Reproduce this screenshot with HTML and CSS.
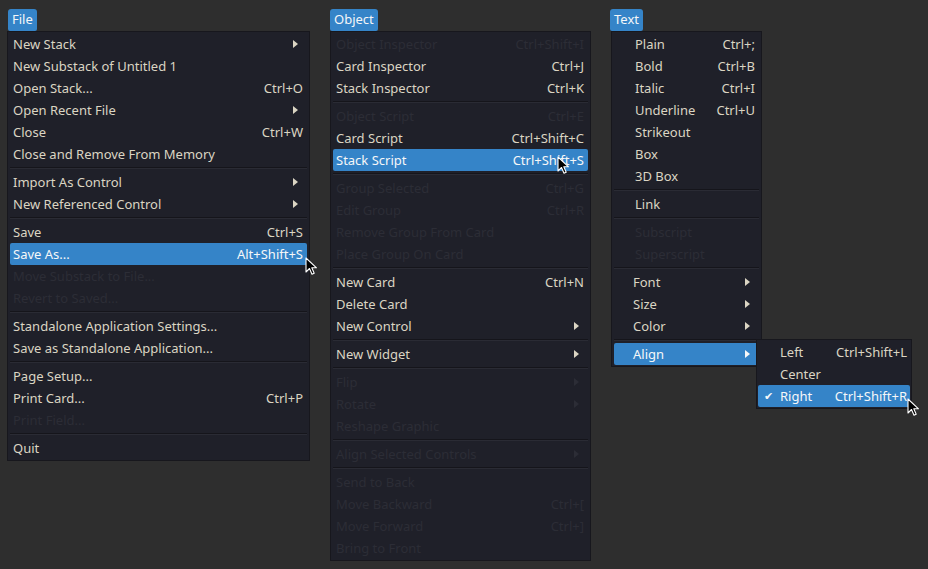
FILE: index.html
```html
<!DOCTYPE html>
<html>
<head>
<meta charset="utf-8">
<link rel="stylesheet" href="styles.css">
</head>
<body>
<div class="bar">
  <div class="col col-file">
    <div class="title">File</div>
    <div class="menu">
      <div class="item"><span class="label">New Stack</span><span class="arrow"></span></div>
      <div class="item"><span class="label">New Substack of Untitled 1</span></div>
      <div class="item"><span class="label">Open Stack...</span><span class="key">Ctrl+O</span></div>
      <div class="item"><span class="label">Open Recent File</span><span class="arrow"></span></div>
      <div class="item"><span class="label">Close</span><span class="key">Ctrl+W</span></div>
      <div class="item"><span class="label">Close and Remove From Memory</span></div>
      <div class="sep"></div>
      <div class="item"><span class="label">Import As Control</span><span class="arrow"></span></div>
      <div class="item"><span class="label">New Referenced Control</span><span class="arrow"></span></div>
      <div class="sep"></div>
      <div class="item"><span class="label">Save</span><span class="key">Ctrl+S</span></div>
      <div class="item active"><span class="label">Save As...</span><span class="key">Alt+Shift+S</span>
        <svg class="cursor" width="14" height="20" viewBox="0 0 14 20"><path d="M1 1 L1 15 L4.5 11.5 L7 17.2 L9.2 16.2 L6.8 10.8 L11.5 10.8 Z" fill="#000" stroke="#fff" stroke-width="1.1" stroke-linejoin="round"/></svg>
      </div>
      <div class="item disabled"><span class="label">Move Substack to File...</span></div>
      <div class="item disabled"><span class="label">Revert to Saved...</span></div>
      <div class="sep"></div>
      <div class="item"><span class="label">Standalone Application Settings...</span></div>
      <div class="item"><span class="label">Save as Standalone Application...</span></div>
      <div class="sep"></div>
      <div class="item"><span class="label">Page Setup...</span></div>
      <div class="item"><span class="label">Print Card...</span><span class="key">Ctrl+P</span></div>
      <div class="item disabled"><span class="label">Print Field...</span></div>
      <div class="sep"></div>
      <div class="item"><span class="label">Quit</span></div>
    </div>
  </div>

  <div class="col col-object">
    <div class="title">Object</div>
    <div class="menu">
      <div class="item disabled"><span class="label">Object Inspector</span><span class="key">Ctrl+Shift+I</span></div>
      <div class="item"><span class="label">Card Inspector</span><span class="key">Ctrl+J</span></div>
      <div class="item"><span class="label">Stack Inspector</span><span class="key">Ctrl+K</span></div>
      <div class="sep"></div>
      <div class="item disabled"><span class="label">Object Script</span><span class="key">Ctrl+E</span></div>
      <div class="item"><span class="label">Card Script</span><span class="key">Ctrl+Shift+C</span></div>
      <div class="item active"><span class="label">Stack Script</span><span class="key">Ctrl+Shift+S</span>
        <svg class="cursor cursor-obj" width="14" height="20" viewBox="0 0 14 20"><path d="M1 1 L1 15 L4.5 11.5 L7 17.2 L9.2 16.2 L6.8 10.8 L11.5 10.8 Z" fill="#000" stroke="#fff" stroke-width="1.1" stroke-linejoin="round"/></svg>
      </div>
      <div class="sep"></div>
      <div class="item disabled"><span class="label">Group Selected</span><span class="key">Ctrl+G</span></div>
      <div class="item disabled"><span class="label">Edit Group</span><span class="key">Ctrl+R</span></div>
      <div class="item disabled"><span class="label">Remove Group From Card</span></div>
      <div class="item disabled"><span class="label">Place Group On Card</span></div>
      <div class="sep"></div>
      <div class="item"><span class="label">New Card</span><span class="key">Ctrl+N</span></div>
      <div class="item"><span class="label">Delete Card</span></div>
      <div class="item"><span class="label">New Control</span><span class="arrow"></span></div>
      <div class="sep"></div>
      <div class="item"><span class="label">New Widget</span><span class="arrow"></span></div>
      <div class="sep"></div>
      <div class="item disabled"><span class="label">Flip</span><span class="arrow"></span></div>
      <div class="item disabled"><span class="label">Rotate</span><span class="arrow"></span></div>
      <div class="item disabled"><span class="label">Reshape Graphic</span></div>
      <div class="sep"></div>
      <div class="item disabled"><span class="label">Align Selected Controls</span><span class="arrow"></span></div>
      <div class="sep"></div>
      <div class="item disabled"><span class="label">Send to Back</span></div>
      <div class="item disabled"><span class="label">Move Backward</span><span class="key">Ctrl+[</span></div>
      <div class="item disabled"><span class="label">Move Forward</span><span class="key">Ctrl+]</span></div>
      <div class="item disabled"><span class="label">Bring to Front</span></div>
    </div>
  </div>

  <div class="col col-text">
    <div class="title">Text</div>
    <div class="menu">
      <div class="item check"><span class="label">Plain</span><span class="key">Ctrl+;</span></div>
      <div class="item check"><span class="label">Bold</span><span class="key">Ctrl+B</span></div>
      <div class="item check"><span class="label">Italic</span><span class="key">Ctrl+I</span></div>
      <div class="item check"><span class="label">Underline</span><span class="key">Ctrl+U</span></div>
      <div class="item check"><span class="label">Strikeout</span></div>
      <div class="item check"><span class="label">Box</span></div>
      <div class="item check"><span class="label">3D Box</span></div>
      <div class="sep"></div>
      <div class="item check"><span class="label">Link</span></div>
      <div class="sep"></div>
      <div class="item check disabled"><span class="label">Subscript</span></div>
      <div class="item check disabled"><span class="label">Superscript</span></div>
      <div class="sep"></div>
      <div class="item sub"><span class="label">Font</span><span class="arrow"></span></div>
      <div class="item sub"><span class="label">Size</span><span class="arrow"></span></div>
      <div class="item sub"><span class="label">Color</span><span class="arrow"></span></div>
      <div class="sep"></div>
      <div class="item sub active align"><span class="label">Align</span><span class="arrow"></span>
        <div class="menu submenu">
          <div class="item check"><span class="label">Left</span><span class="key">Ctrl+Shift+L</span></div>
          <div class="item check"><span class="label">Center</span></div>
          <div class="item check active"><span class="tick">&#10004;</span><span class="label">Right</span><span class="key">Ctrl+Shift+R</span>
            <svg class="cursor cursor-text" width="14" height="20" viewBox="0 0 14 20"><path d="M1 1 L1 15 L4.5 11.5 L7 17.2 L9.2 16.2 L6.8 10.8 L11.5 10.8 Z" fill="#000" stroke="#fff" stroke-width="1.1" stroke-linejoin="round"/></svg>
          </div>
        </div>
      </div>
    </div>
  </div>
</div>
</body>
</html>
```

FILE: styles.css
```css
*, *::before, *::after { box-sizing: border-box; }
html, body {
  margin: 0;
  padding: 0;
  background: #2e2e2e;
  width: 928px;
  height: 569px;
  overflow: hidden;
}
body {
  font-family: "Noto Sans", "Open Sans", sans-serif;
  font-size: 13px;
  color: #dbd5c3;
}
.bar {
  display: flex;
  align-items: flex-start;
  padding: 9px 0 0 7px;
}
.col {
  flex: none;
  display: flex;
  flex-direction: column;
  align-items: flex-start;
}
.col-file { width: 303px; }
.col-object { width: 261px; margin-left: 20px; }
.col-text { width: 151px; margin-left: 20px; }

.title {
  margin-left: 1px;
  height: 22px;
  line-height: 21px;
  padding: 0 4px 0 4px;
  background: #3584c8;
  color: #f4f6f8;
  border-radius: 3px 3px 2px 2px;
}
.col-object .title { margin-left: 0; }
.col-text .title { margin-left: -1px; }
.menu {
  align-self: stretch;
  background: #1f2029;
  border: 1px solid #17171d;
  padding: 1px 2px;
  display: flex;
  flex-direction: column;
}
.item {
  position: relative;
  height: 22px;
  display: flex;
  align-items: center;
  padding: 0 4px 0 3px;
  white-space: nowrap;
  border-radius: 2px;
}
.item .label { flex: 1; }
.item .key { margin-left: 12px; }
.item .arrow {
  width: 0;
  height: 0;
  border-left: 5px solid #dbd5c3;
  border-top: 4px solid transparent;
  border-bottom: 4px solid transparent;
  margin-right: 5px;
}
.item.disabled { color: #2c2d36; }
.item.disabled .arrow { border-left-color: #2c2d36; }
.item.active {
  background: #3584c8;
  color: #f6f7f8;
}
.item.active .arrow { border-left-color: #f6f7f8; }
.item.check { padding-left: 21px; }
.item.sub { padding-left: 19px; }
.tick {
  position: absolute;
  left: 6px;
  top: 3px;
  font-size: 11px;
  color: #f6f7f8;
}
.sep {
  height: 2px;
  margin: 2px 0;
  border-top: 1px solid #15151b;
  border-bottom: 1px solid #2a2b34;
}
.submenu {
  position: absolute;
  left: 142px;
  top: -4px;
  width: 156px;
  padding: 1px 1px;
  z-index: 2;
  color: #dbd5c3;
}
.submenu .item { padding-left: 22px; padding-right: 3px; }
.cursor {
  position: absolute;
  right: -12px;
  top: 14px;
  z-index: 5;
}
.cursor-obj { right: 17px; top: 7px; }
.cursor-text { right: -11px; top: 13px; }
```
